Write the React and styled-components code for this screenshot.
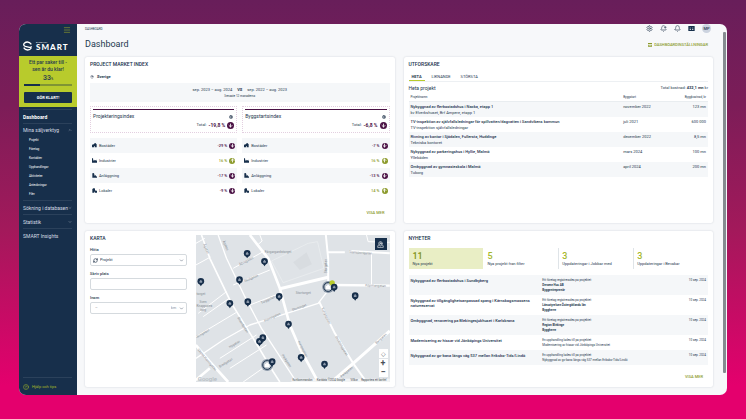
import React, { useState } from 'react';
import styled, { createGlobalStyle } from 'styled-components';
import {
  ArrowDown, ArrowUp, Bell, BellPlus, ChevronDown, ChevronUp, CircleHelp,
  MapPin, MapPinned, Menu, RefreshCw, Settings,
} from 'lucide-react';

const navy = '#172f4b';
const ink = '#26384f';
const plum = '#4b1245';
const olive = '#8c9a2b';
const lime = '#b8cb2c';

const GlobalStyle = createGlobalStyle`
  * {
    box-sizing: border-box;
  }

  body {
    margin: 0;
    color: ${ink};
    font: 4px/6px Roboto, 'Liberation Sans', sans-serif;
  }

  h1, h2, p, ul {
    margin: 0;
    padding: 0;
  }

  ul {
    list-style: none;
  }

  a {
    color: inherit;
    text-decoration: none;
  }

  button, input, select {
    margin: 0;
    padding: 0;
    border: 0;
    background: none;
    color: inherit;
    font: inherit;
  }
`;

const Page = styled.div`
  display: flex;
  min-height: 100vh;
  padding: 24px 19px;
  background: linear-gradient(#681e5a 0%, #7c1d58 25%, #a3195b 55%, #e4006d 92%);
`;

const AppWindow = styled.div`
  flex: 1;
  display: grid;
  grid-template-columns: 58px 1fr 4px;
  overflow: hidden;
  border-radius: 7px;
  background: #f7f8fa;
`;

const Sidebar = styled.aside`
  display: flex;
  flex-direction: column;
  background: ${navy};
  color: #d5dce4;
`;

const MenuButton = styled.button`
  align-self: flex-end;
  display: flex;
  margin: 2px 6px 0;
  color: ${olive};
`;

const Logo = styled.a`
  display: flex;
  align-items: center;
  gap: 4px;
  height: 11px;
  margin: 6px 5px 5px 4px;
  color: #fff;
`;

const Brand = styled.span`
  display: flex;
  flex-direction: column;
  font: 900 8px/8px Lato, sans-serif;
  letter-spacing: 1px;

  small {
    font-size: 2px;
    line-height: 2px;
    font-weight: 400;
    letter-spacing: normal;
  }
`;

const Setup = styled.section`
  padding: 3px 5px 4px;
  background: ${lime};
  color: ${ink};
  text-align: center;
`;

const SetupText = styled.p`
  font-size: 5px;
  line-height: 7px;
  font-weight: 500;
`;

const Percent = styled.p`
  margin: 1px 0;
  font: 500 7px/8px Roboto, sans-serif;

  small {
    font-size: 3px;
  }
`;

const Progress = styled.div`
  height: 2px;
  background: #7f9434;
`;

const ProgressFill = styled.div`
  height: 100%;
  background: ${navy};
`;

const SetupButton = styled.button`
  width: 100%;
  height: 11px;
  margin-top: 6px;
  border-radius: 1px;
  background: ${navy};
  color: #fff;
  font-weight: 700;
`;

const Nav = styled.nav`
  padding: 2px 5px 0 4px;
`;

const NavItem = styled.a`
  display: flex;
  align-items: center;
  justify-content: space-between;
  height: ${p => (p.$open ? 13 : 14)}px;
  border-top: 1px solid #2b415b;
  color: ${p => (p.$active ? '#fff' : '#d5dce4')};
  font-size: 5px;
  font-weight: ${p => (p.$active ? 700 : 400)};
  white-space: nowrap;
`;

const SubNav = styled.ul`
  padding: 0 0 1px 6px;
  color: #fff;
  font-size: 3px;
  line-height: 9px;
`;

const Help = styled.a`
  display: flex;
  align-items: center;
  gap: 3px;
  height: 18px;
  margin: auto 5px 0 4px;
  border-top: 1px solid #2b415b;
  color: #a5b82a;
`;

const Main = styled.main`
  padding: 0 10px 7px 8px;
`;

const TopBar = styled.header`
  display: flex;
  align-items: center;
  justify-content: space-between;
  height: 9px;
  font-size: 3px;
`;

const TopIcons = styled.div`
  display: flex;
  align-items: center;
  gap: 7px;
  padding-right: 2px;

  button {
    display: flex;
  }
`;

const Avatar = styled.button`
  justify-content: center;
  width: 9px;
  height: 9px;
  border-radius: 50%;
  background: #ccd3df;
  font-size: 4px;
  line-height: 9px;
  font-weight: 500;
`;

const Heading = styled.div`
  display: flex;
  align-items: center;
  justify-content: space-between;
  padding: 5px 5px 6px 0;

  h1 {
    font: 400 9px/13px Roboto, sans-serif;
  }
`;

const SettingsLink = styled.a`
  display: flex;
  align-items: center;
  gap: 2px;
  color: ${olive};
  font-size: 4px;
  font-weight: 500;
`;

const Cards = styled.div`
  display: grid;
  grid-template-columns: 1fr 1fr;
  gap: 8px 9px;
`;

const Card = styled.section`
  display: flex;
  flex-direction: column;
  min-width: 0;
  padding: 4px 5px 6px;
  border-radius: 2px;
  background: #fff;
  box-shadow: 0 0 2px rgba(30, 50, 80, 0.2);
`;

const CardTitle = styled.h2`
  font: 500 5px/6px Roboto, sans-serif;
  color: ${navy};
`;

const More = styled.a`
  align-self: flex-end;
  margin: ${p => (p.$wide ? 11 : 8)}px 5px 0 0;
  color: ${olive};
  line-height: 8px;
  font-weight: 500;
`;

const Region = styled.p`
  display: flex;
  align-items: center;
  gap: 3px;
  margin-top: 7px;
  font-weight: 700;
`;

const Period = styled.div`
  margin: 3px 0 4px;
  padding: 3px 0 2px;
  background: #f5f7f9;
  text-align: center;
  line-height: 7px;

  b {
    margin: 0 4px;
  }

  small {
    display: block;
    font-size: 3px;
    line-height: 7px;
  }
`;

const IndexGrid = styled.div`
  display: grid;
  grid-template-columns: 1fr 1fr;
  gap: 5px;
`;

const IndexBox = styled.div`
  margin-bottom: 5px;
  padding: 2px 2px 3px;
  border: 1px dotted #e3cfe0;
`;

const IndexName = styled.div`
  display: flex;
  align-items: center;
  justify-content: space-between;
  padding: 3px 1px 0 0;
  border-top: 1px solid ${plum};
  font-size: 5px;
  line-height: 7px;
`;

const Total = styled.div`
  display: flex;
  align-items: center;
  justify-content: flex-end;
  gap: 2px;
  margin-top: 1px;
  line-height: 8px;

  strong {
    color: ${plum};
    font-size: 5px;
  }
`;

const Trend = styled.span`
  display: inline-flex;
  align-items: center;
  justify-content: center;
  width: ${p => (p.$large ? 7 : 6)}px;
  height: ${p => (p.$large ? 7 : 6)}px;
  border-radius: 50%;
  background: ${p => (p.$up ? olive : plum)};
  color: #fff;
`;

const Sector = styled.li`
  display: flex;
  align-items: center;
  gap: 2px;
  height: 15px;
  padding: 0 2px;

  &:nth-child(odd) {
    background: #f5f7f9;
  }
`;

const Change = styled.span`
  margin-left: auto;
  color: ${p => (p.$up ? olive : plum)};
  font-weight: 500;
`;

const Tabs = styled.div`
  display: flex;
  margin-top: 6px;
  border-bottom: 1px solid #edf0f3;
`;

const Tab = styled.button`
  margin-right: 4px;
  padding: 0 3px;
  border-bottom: 1px solid ${p => (p.$active ? lime : 'transparent')};
  font-size: 4px;
  line-height: 7px;
  font-weight: ${p => (p.$active ? 700 : 400)};
`;

const Summary = styled.div`
  display: flex;
  justify-content: space-between;
  margin: 3px 0 2px;

  p:first-child {
    font-size: 5px;
  }
`;

const ProjectTable = styled.table`
  width: 100%;
  border-spacing: 0;
  text-align: left;

  th {
    padding: 2px 2px 1px;
    font-size: 3px;
    line-height: 5px;
    font-weight: 400;
    border-bottom: 1px solid #e9edf0;
  }

  th:first-child {
    width: 71%;
  }

  td {
    padding: 2px 2px 1px;
    vertical-align: top;
  }

  th:last-child, td:last-child {
    text-align: right;
    white-space: nowrap;
  }

  tbody tr:nth-child(odd) {
    background: #f5f7f9;
  }
`;

const Strong = styled.div`
  font-weight: 500;
  color: ${navy};
`;

const MapCard = styled(Card)`
  display: grid;
  grid-template-columns: 1fr 2fr;
  gap: 9px;
  padding-bottom: 5px;
`;

const Filters = styled.form`
  label {
    display: block;
    margin: 5px 0 1px;
    font-weight: 500;
  }

  ${CardTitle} + label {
    margin-top: 6px;
  }
`;

const Field = styled.div`
  display: flex;
  align-items: center;
  gap: 2px;
  height: 12px;
  padding: 0 2px;
  border: 1px solid #d5dade;
  border-radius: 2px;

  input, select {
    min-width: 0;
    appearance: none;
    outline: none;
  }

  input {
    flex: 1;
    padding-left: 2px;
  }
`;

const WideSelect = styled.select`
  flex: 1;
`;

const UnitSelect = styled.select`
  color: #8a95a2;
`;

const MapArea = styled.div`
  position: relative;
  display: flex;
  min-height: 147px;
  overflow: hidden;
  background: #dfe3e7;

  > svg {
    flex: 1;
    min-width: 0;
    height: 147px;
  }
`;

const DrawButton = styled.button`
  position: absolute;
  top: 3px;
  right: 3px;
  display: flex;
  align-items: center;
  justify-content: center;
  width: 12px;
  height: 12px;
  background: ${navy};
  color: #fff;
`;

const MapControls = styled.div`
  position: absolute;
  right: 2px;
  bottom: 5px;
  display: grid;
  width: 9px;

  button {
    height: 9px;
    background: #fff;
    color: #4a5159;
    font: 700 9px/9px Roboto, sans-serif;
  }

  button:first-child {
    margin-bottom: 1px;
    font-weight: 400;
    font-size: 6px;
  }
`;

const Counters = styled.div`
  display: grid;
  grid-template-columns: repeat(4, 1fr);
  margin: 7px 0 6px;
`;

const Counter = styled.button`
  padding: 3px 3px 2px;
  border-left: 1px solid ${p => (p.$line ? '#dfe4e8' : 'transparent')};
  background: ${p => (p.$active ? '#e9eec5' : 'transparent')};
  text-align: left;
  white-space: nowrap;

  b {
    display: block;
    color: ${p => (p.$active ? '#7f9117' : '#a5b82a')};
    font-size: 9px;
    line-height: 10px;
    font-weight: 500;
  }
`;

const NewsTable = styled.table`
  width: 100%;
  border-spacing: 0;
  line-height: 5px;

  td {
    padding: 3px 2px 2px;
    vertical-align: top;
  }

  td:first-child {
    width: 44%;
    padding-right: 8px;
    font-weight: 500;
    color: ${navy};
  }

  td + td {
    font-size: 3px;
  }

  td:last-child {
    text-align: right;
  }

  tr:nth-child(odd) {
    background: #f5f7f9;
  }
`;

const ScrollTrack = styled.div`
  padding: 8px 1px 22px 0;
`;

const ScrollThumb = styled.div`
  height: 100%;
  border-radius: 1px;
  background: #858b90;
`;

const subItems = ['Projekt', 'Företag', 'Kontakter', 'Upphandlingar', 'Aktiviteter', 'Anteckningar', 'Filer'];

const indexes = [
  { name: 'Projekteringsindex', total: '-19,8 %', changes: ['-29 %', '16 %', '-17 %', '-9 %'] },
  { name: 'Byggstartsindex', total: '-6,8 %', changes: ['-7 %', '16 %', '-13 %', '14 %'] },
];

// Solid 15x15 glyphs, one for each sector
const sectors = [
  ['Bostäder', 'M0 13V6l4-3 2 2V2l4-2 4 4v9H9v-4H7v4z'],
  ['Industrier', 'M0 14V1h3l1 7 4-3v3l5-3v3h2v6z'],
  ['Anläggning', 'M1 14V1l4-1 2 3v5l3-2 2 3 3 2v3z'],
  ['Lokaler', 'M1 14V3l5-3 3 2v6l3-1 3 3v4H9v-3H7v3z'],
];

const projects = [
  ['Nybyggnad av flerbostadshus i Nacka, etapp 1', 'kv Elverkshuset, Brf Ampere, etapp 1', 'november 2022', '123 mn'],
  ['TV-inspektion av självfallsledningar för spillvatten/dagvatten i Sandvikens kommun', 'TV-inspektion självfallsledningar', 'juli 2021', '600 000'],
  ['Rivning av kontor i Sjödalen, Fullersta, Huddinge', 'Tekniska kontoret', 'december 2022', '8,5 mn'],
  ['Nybyggnad av parkeringshus i Hyllie, Malmö', 'Yllebäden', 'mars 2024', '100 mn'],
  ['Ombyggnad av gymnasieskola i Malmö', 'Tuborg', 'april 2024', '200 mn'],
];

const counters = [
  [11, 'Nya projekt'],
  [5, 'Nya projekt från filter'],
  [3, 'Uppdateringar i Jobbar med'],
  [3, 'Uppdateringar i Bevakar'],
];

const news = [
  ['Nybyggnad av flerbostadshus i Sundbyberg', 'Ett företag registrerades på projektet', 'Derome Hus AB', 'Byggentreprenör'],
  ['Nybyggnad av tillgänglighetsanpassad spång i Kärnskogsmossens naturreservat', 'Ett företag registrerades på projektet', 'Länsstyrelsen Östergötlands län', 'Byggherre'],
  ['Ombyggnad, renovering på Blekingesjukhuset i Karlskrona', 'Ett företag registrerades på projektet', 'Region Blekinge', 'Byggherre'],
  ['Modernisering av hissar vid Jönköpings Universitet', 'En upphandling lades till på projektet', 'Modernisering av hissar vid Jönköpings Universitet'],
  ['Nybyggnad av gc-bana längs väg 537 mellan Eriksbo-Tids/Lindö', 'En upphandling lades till på projektet', 'Nybyggnad av gc-bana längs väg 537 mellan Eriksbo-Tids/Lindö'],
];

const roads = [
  ['M180 30 235 100 270 190 300 300 330 370 385 471', 8],
  ['M85 30 110 100 165 215 215 310 320 471', 4],
  ['M35 30 60 100 125 235 190 340 250 440 270 471', 5],
  ['M270 191 415 157', 9],
  ['M408 30 415 100 415 180', 6],
  ['M413 82 465 82M480 78 600 85', 6],
  ['M430 180 600 182', 7],
  ['M412 200 385 235 300 262 180 300 100 345 18 400', 4],
  ['M388 230 435 325 490 415 530 471', 6],
  ['M600 318 490 415 425 471', 9],
  ['M18 360 60 410 115 471M18 465 60 430', 8],
  ['M18 120 62 96M25 265 110 200M40 275 118 220M18 335 140 262M130 130 220 80M130 180 240 135M180 240 270 205', 3],
  ['M90 400 200 330M120 430 230 360M160 471 240 415M18 55 45 40M210 30 217 48 205 58M530 30 535 50 600 52M545 85 545 180', 3],
];

const mapLabels = [
  ['Färgargårdstorget', 225, 83, 0], ['Stortorget', 318, 208, 0], ['Stortorget', 308, 258, -20],
  ['Transportgatan', 478, 84, 4], ['Köpmangatan', 526, 184, 2], ['Storgatan', 413, 145, -90],
  ['Sven', 29, 234, 0], ['Knappares', 20, 245, 0], ['torg', 31, 257, 0], ['torget', 20, 209, 0],
  ['Åbrogatan', 150, 122, -27], ['Skolgatan', 165, 172, -24], ['Torggatan', 215, 237, -25],
  ['Hamngatan', 225, 290, -24], ['Nygatan', 120, 370, -31], ['Bredgatan', 90, 428, -31],
  ['Järngatan', 20, 340, -30], ['Västra Hamngatan', 22, 374, 50], ['Strandgatan', 142, 278, 58],
  ['Kungsgatan', 324, 350, 63], ['Kungsgatan', 395, 250, 65], ['Drottninggatan', 436, 335, 60],
  ['Bangatan', 560, 358, -42], ['Parkgatan', 275, 390, 57], ['Parkgatan', 455, 458, -40],
  ['Ågatan', 40, 58, 66], ['Ågatan', 98, 48, 66],
];

const pins = [
  [172, 85], [224, 109], [149, 164], [33, 169], [120, 235], [174, 230], [268, 214], [296, 297],
  [219, 338], [209, 349], [334, 397], [404, 417], [496, 212], [247, 410], [433, 186],
];

function CityMap() {
  return (
    <svg viewBox="18 30 582 441" preserveAspectRatio="xMidYMid slice" role="img" aria-label="Karta">
      <path d="M245 108 355 55 383 50 402 130 280 173Z" fill="none" stroke="#edf0f1" strokeWidth="2" />
      <path d="M310 112 350 82 366 118 330 135Z" fill="#d8dce0" />
      {roads.map(([d, width]) => (
        <path key={d} d={d} fill="none" stroke="#fff" strokeWidth={width} strokeLinejoin="round" />
      ))}
      <g fill="#858c93" fontSize="10" fontFamily="Roboto, sans-serif">
        {mapLabels.map(([text, x, y, angle]) => (
          <text key={`${text}${x}`} x={x} y={y} transform={`rotate(${angle} ${x} ${y})`}>{text}</text>
        ))}
      </g>
      {[[415, 186], [232, 420]].map(([x, y]) => (
        <g key={x}>
          <circle cx={x} cy={y} r="18" fill="#8b98a8" />
          <circle cx={x} cy={y} r="13" fill="#c9d0d8" stroke={navy} strokeWidth="3" />
          <path d={`M${x - 7} ${y + 6}v-9h4v-4h6v4h4v9z`} fill="#fff" />
        </g>
      ))}
      <circle cx="427" cy="174" r="8" fill={lime} />
      {pins.map(([x, y]) => (
        <g key={x}>
          <path d={`M${x - 6} ${y + 6}h12l-6 9z`} fill={navy} />
          <circle cx={x} cy={y} r="10" fill={navy} />
          <path d={`M${x - 4} ${y + 4}v-5h2v-3h4v3h2v5z`} fill="#8d9aac" />
        </g>
      ))}
      <text x="24" y="467" fontSize="18" fontWeight="500" fill="#b5bcc2" fontFamily="Roboto, sans-serif">Google</text>
      <path d="M305 461h295v10H305z" fill="#f2f4f5" />
      <g fill="#3d444b" fontSize="8" fontFamily="Roboto, sans-serif">
        <text x="308" y="469">Kortkommandon</text>
        <text x="381" y="469">Kartdata ©2024 Google</text>
        <text x="482" y="469">Villkor</text>
        <text x="514" y="469">Rapportera ett kartfel</text>
      </g>
    </svg>
  );
}

function IndexColumn({ index }) {
  return (
    <div>
      <IndexBox>
        <IndexName>{index.name}<Settings size={4} strokeWidth={4} /></IndexName>
        <Total>
          Total: <strong>{index.total}</strong>
          <Trend $large><ArrowDown size={5} strokeWidth={4} /></Trend>
        </Total>
      </IndexBox>
      <ul>
        {sectors.map(([name, shape], i) => {
          const up = !index.changes[i].startsWith('-');
          const Arrow = up ? ArrowUp : ArrowDown;
          return (
            <Sector key={name}>
              <svg width="5" height="5" viewBox="0 0 15 15"><path d={shape} fill={navy} /></svg>
              {name}
              <Change $up={up}>{index.changes[i]}</Change>
              <Trend $up={up}><Arrow size={5} strokeWidth={4} /></Trend>
            </Sector>
          );
        })}
      </ul>
    </div>
  );
}

export default function App() {
  const [tab, setTab] = useState('HETA');
  const [counter, setCounter] = useState(0);
  const progress = 33;

  return (
    <Page>
      <GlobalStyle />
      <AppWindow>
        <Sidebar>
          <MenuButton aria-label="Meny"><Menu size={8} /></MenuButton>
          <Logo href="#">
            <svg width="9" height="10" viewBox="0 0 27 30" fill="none" stroke="#fff" strokeWidth="4">
              <path d="M25 10C21 4 17 3 13 3 6 3 2 8 2 11c0 3 2 4 5 5l12 3c4 1 6 0 6-3" />
              <path d="M2 20c3 5 7 7 12 7 6 0 9-3 11-6" />
            </svg>
            <Brand><small>BYGGFAKTA</small><span>SMART</span></Brand>
          </Logo>
          <Setup>
            <SetupText>Ett par saker till -<br />sen är du klar!</SetupText>
            <Percent>{progress}<small>%</small></Percent>
            <Progress><ProgressFill style={{ width: `${progress}%` }} /></Progress>
            <SetupButton>GÖR KLART!</SetupButton>
          </Setup>
          <Nav>
            <NavItem href="#" $active>Dashboard</NavItem>
            <NavItem href="#" $open>Mina säljverktyg<ChevronUp size={4} /></NavItem>
            <SubNav>
              {subItems.map(item => <li key={item}><a href="#">{item}</a></li>)}
            </SubNav>
            <NavItem href="#">Sökning i databasen<ChevronDown size={4} /></NavItem>
            <NavItem href="#">Statistik<ChevronDown size={4} /></NavItem>
            <NavItem href="#">SMART Insights</NavItem>
          </Nav>
          <Help href="#"><CircleHelp size={6} />Hjälp och tips</Help>
        </Sidebar>

        <Main>
          <TopBar>
            <span>DASHBOARD</span>
            <TopIcons>
              <button aria-label="Inställningar"><Settings size={7} /></button>
              <button aria-label="Bevakningar"><BellPlus size={7} /></button>
              <button aria-label="Notiser"><Bell size={7} /></button>
              <button aria-label="Nyheter">
                <svg width="7" height="7" viewBox="0 0 21 21">
                  <path d="M1 3h19v15H1z" fill={navy} />
                  <path d="M5 8h4v2H5zM12 8h4v2h-4zM5 12h4v2H5zM12 12h4v2h-4z" fill="#fff" />
                </svg>
              </button>
              <Avatar>MP</Avatar>
            </TopIcons>
          </TopBar>
          <Heading>
            <h1>Dashboard</h1>
            <SettingsLink href="#">
              <svg width="4" height="4" viewBox="0 0 12 12">
                <path d="M0 0h12v3H0zM0 5h5v3H0zM7 5h5v3H7zM0 10h12v2H0z" fill={olive} />
              </svg>
              DASHBOARDINSTÄLLNINGAR
            </SettingsLink>
          </Heading>

          <Cards>
            <Card>
              <CardTitle>PROJECT MARKET INDEX</CardTitle>
              <Region><MapPin size={4} />Sverige</Region>
              <Period>
                <div>sep. 2023 – aug. 2024 <b>VS</b> sep. 2022 – aug. 2023</div>
                <small>Senaste 12 månaderna</small>
              </Period>
              <IndexGrid>
                {indexes.map(index => <IndexColumn key={index.name} index={index} />)}
              </IndexGrid>
              <More href="#" $wide>VISA MER</More>
            </Card>

            <Card>
              <CardTitle>UTFORSKARE</CardTitle>
              <Tabs>
                {['HETA', 'LIKNANDE', 'STÖRSTA'].map(name => (
                  <Tab key={name} $active={tab === name} onClick={() => setTab(name)}>{name}</Tab>
                ))}
              </Tabs>
              <Summary>
                <p>Heta projekt</p>
                <p>Total kostnad: <b>432,1 mn</b> kr</p>
              </Summary>
              <ProjectTable>
                <thead>
                  <tr><th>Projektnamn</th><th>Byggstart</th><th>Byggkostnad, kr</th></tr>
                </thead>
                <tbody>
                  {projects.map(([name, detail, start, cost]) => (
                    <tr key={name}>
                      <td><Strong>{name}</Strong>{detail}</td>
                      <td>{start}</td>
                      <td>{cost}</td>
                    </tr>
                  ))}
                </tbody>
              </ProjectTable>
            </Card>

            <MapCard>
              <Filters>
                <CardTitle>KARTA</CardTitle>
                <label htmlFor="find">Hitta</label>
                <Field>
                  <RefreshCw size={5} strokeWidth={3} />
                  <WideSelect id="find"><option>Projekt</option></WideSelect>
                  <ChevronDown size={5} />
                </Field>
                <label htmlFor="place">Skriv plats</label>
                <Field><input id="place" /></Field>
                <label htmlFor="radius">Inom</label>
                <Field>
                  <input id="radius" placeholder="–" />
                  <UnitSelect aria-label="Enhet"><option>km</option></UnitSelect>
                  <ChevronDown size={5} />
                </Field>
              </Filters>
              <MapArea>
                <CityMap />
                <DrawButton aria-label="Rita område"><MapPinned size={7} /></DrawButton>
                <MapControls>
                  <button aria-label="Min plats">◇</button>
                  <button aria-label="Zooma in">+</button>
                  <button aria-label="Zooma ut">−</button>
                </MapControls>
              </MapArea>
            </MapCard>

            <Card>
              <CardTitle>NYHETER</CardTitle>
              <Counters>
                {counters.map(([count, label], i) => (
                  <Counter key={label} $active={counter === i} $line={i > 1} onClick={() => setCounter(i)}>
                    <b>{count}</b>{label}
                  </Counter>
                ))}
              </Counters>
              <NewsTable>
                <tbody>
                  {news.map(([name, event, detail, role]) => (
                    <tr key={name}>
                      <td>{name}</td>
                      <td>
                        {event}<br />
                        {role ? <b>{detail}<br />{role}</b> : detail}
                      </td>
                      <td>10 sep. 2024</td>
                    </tr>
                  ))}
                </tbody>
              </NewsTable>
              <More href="#">VISA MER</More>
            </Card>
          </Cards>
        </Main>
        <ScrollTrack><ScrollThumb /></ScrollTrack>
      </AppWindow>
    </Page>
  );
}
